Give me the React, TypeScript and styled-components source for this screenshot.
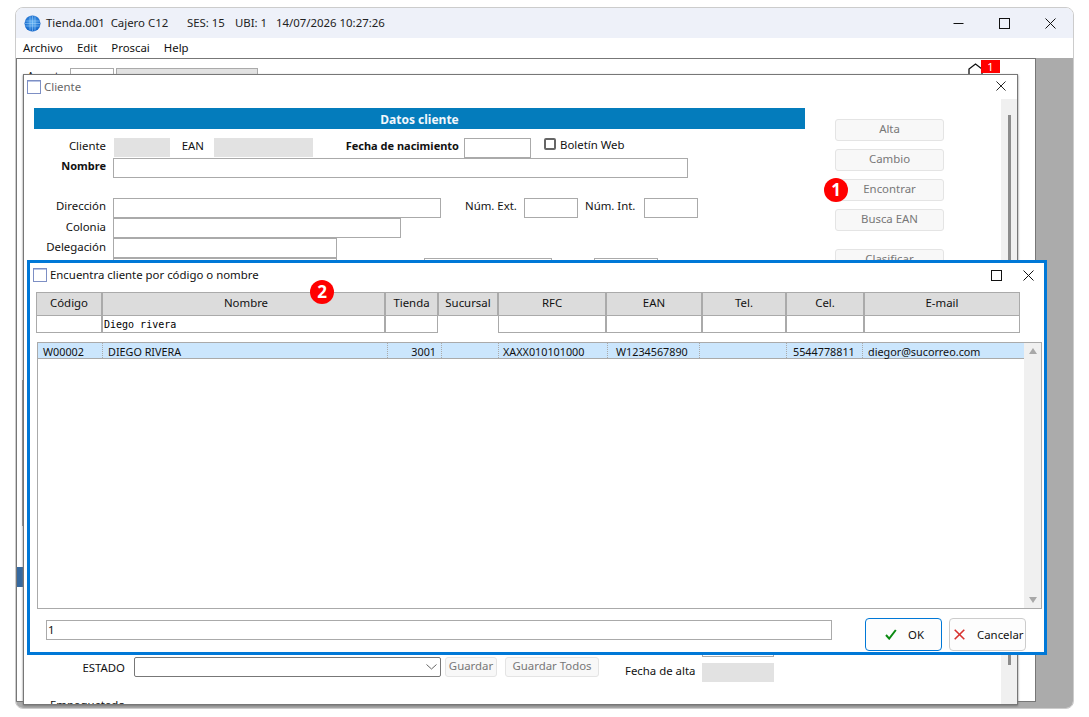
import React from 'react'
import styled, { createGlobalStyle } from 'styled-components'

const GlobalStyle = createGlobalStyle`
  html, body { margin: 0; padding: 0; background: #fff; }
  body { font-family: 'Noto Sans', 'Liberation Sans', sans-serif; font-size: 11.4px; color: #111; }
`

const GlobeIcon = () => (
  <svg width="17" height="17" viewBox="0 0 17 17">
    <defs>
      <radialGradient id="g" cx="50%" cy="45%" r="55%">
        <stop offset="0%" stopColor="#5fb2f5" />
        <stop offset="100%" stopColor="#0f62c8" />
      </radialGradient>
    </defs>
    <circle cx="8.5" cy="8.5" r="8" fill="url(#g)" />
    <path d="M1 6h15M1 8.5h15M1 11h15M6 1v15M8.5 1v15M11 1v15" stroke="#a8d4fa" strokeWidth="0.5" fill="none" />
  </svg>
)

const DocIcon = () => (
  <svg width="14" height="14" viewBox="0 0 14 14">
    <rect x="0.5" y="0.5" width="13" height="13" fill="#fff" stroke="#7d8fc4" />
    <path d="M1 1.5h12" stroke="#b9c5e6" />
  </svg>
)

const CloseIcon = ({ size = 11 }: { size?: number }) => (
  <svg width={size} height={size} viewBox="0 0 11 11">
    <path d="M0.5 0.5l10 10M10.5 0.5l-10 10" stroke="#111" strokeWidth="1" fill="none" />
  </svg>
)

const MaxIcon = () => (
  <svg width="11" height="11" viewBox="0 0 11 11">
    <rect x="0.5" y="0.5" width="10" height="10" fill="none" stroke="#111" />
  </svg>
)

const MinIcon = () => (
  <svg width="11" height="11" viewBox="0 0 11 11">
    <path d="M0.5 5.5h10" stroke="#111" fill="none" />
  </svg>
)

const COLUMNS = [
  { name: 'Código', w: 66 },
  { name: 'Nombre', w: 283, filter: 'Diego rivera', shift: 5 },
  { name: 'Tienda', w: 53 },
  { name: 'Sucursal', w: 60, noFilter: true },
  { name: 'RFC', w: 108 },
  { name: 'EAN', w: 96 },
  { name: 'Tel.', w: 84 },
  { name: 'Cel.', w: 78 },
  { name: 'E-mail', w: 156 },
]

const RESULT = [
  { v: 'W00002', w: 64, pad: 5 },
  { v: 'DIEGO RIVERA', w: 285, pad: 5 },
  { v: '3001', w: 54, pad: 5, right: true },
  { v: '', w: 57, pad: 0 },
  { v: 'XAXX010101000', w: 109, pad: 4 },
  { v: 'W1234567890', w: 92, pad: 8 },
  { v: '', w: 87, pad: 0 },
  { v: '5544778811', w: 76, pad: 6 },
  { v: 'diegor@sucorreo.com', w: 162, pad: 5 },
]

const App = () => {
  return (
    <PAGE>
      <GlobalStyle />
      <SHELL>
        <TITLE_BAR>
          <GlobeIcon />
          <TITLE_TEXT $w={141}>Tienda.001&nbsp; Cajero C12</TITLE_TEXT>
          <TITLE_TEXT $w={48}>SES: 15</TITLE_TEXT>
          <TITLE_TEXT $w={41}>UBI: 1</TITLE_TEXT>
          <TITLE_TEXT>14/07/2026 10:27:26</TITLE_TEXT>
          <WINDOW_CONTROLS>
            <MinIcon />
            <MaxIcon />
            <CloseIcon />
          </WINDOW_CONTROLS>
        </TITLE_BAR>
        <MENU_BAR>
          <span>Archivo</span>
          <span>Edit</span>
          <span>Proscai</span>
          <span>Help</span>
        </MENU_BAR>
        <DESKTOP>
          <PARENT_PANE>
            <PARENT_HEADER>
              <AGENT_LABEL>Agente</AGENT_LABEL>
              <AGENT_INPUT />
              <AGENT_NAME />
              <HOME_ICON>
                <svg width="15" height="14" viewBox="0 0 15 14">
                  <path d="M1 13V6L7.5 1L14 6V13" stroke="#111" strokeWidth="1.3" fill="none" />
                </svg>
                <BADGE>1</BADGE>
              </HOME_ICON>
            </PARENT_HEADER>
            <SIDE_LINE />
            <SIDE_BLOCK />
          </PARENT_PANE>

          <CLIENTE_WINDOW>
            <CHILD_TITLE>
              <DocIcon />
              <CHILD_NAME>Cliente</CHILD_NAME>
              <CHILD_CLOSE>
                <CloseIcon size={10} />
              </CHILD_CLOSE>
            </CHILD_TITLE>
            <CLIENTE_BODY>
              <FORM_COL>
                <SECTION_BAR>Datos cliente</SECTION_BAR>
                <ROW>
                  <LABEL $w={72}>Cliente</LABEL>
                  <READONLY $w={56} $ml={8} />
                  <LABEL $w={23} $ml={11}>EAN</LABEL>
                  <READONLY $w={99} $ml={10} />
                  <LABEL $w={114} $ml={32} $bold>Fecha de nacimiento</LABEL>
                  <FIELD $w={67} $ml={5} />
                  <CHECK_BOX />
                  <CHECK_LABEL>Boletín Web</CHECK_LABEL>
                </ROW>
                <ROW>
                  <LABEL $w={72} $bold>Nombre</LABEL>
                  <FIELD $w={575} $ml={7} />
                </ROW>
                <ROW $mt={20}>
                  <LABEL $w={72}>Dirección</LABEL>
                  <FIELD $w={328} $ml={7} />
                  <LABEL $w={51} $ml={24}>Núm. Ext.</LABEL>
                  <FIELD $w={54} $ml={8} />
                  <LABEL $w={50} $ml={7}>Núm. Int.</LABEL>
                  <FIELD $w={54} $ml={9} />
                </ROW>
                <ROW>
                  <LABEL $w={72} $mt={1}>Colonia</LABEL>
                  <FIELD $w={288} $ml={7} />
                </ROW>
                <ROW>
                  <LABEL $w={72} $mt={1}>Delegación</LABEL>
                  <FIELD $w={224} $ml={7} />
                </ROW>
                <ROW>
                  <FIELD $w={224} $ml={79} />
                  <FIELD $w={128} $ml={87} />
                  <FIELD $w={64} $ml={42} />
                </ROW>
                <ROW $mt={359}>
                  <FIELD $w={72} $ml={668} />
                </ROW>
                <ROW>
                  <LABEL $w={91} $mt={3}>ESTADO</LABEL>
                  <SELECT_BOX>
                    <svg width="11" height="6" viewBox="0 0 11 6">
                      <path d="M0.5 0.5L5.5 5L10.5 0.5" stroke="#666" fill="none" />
                    </svg>
                  </SELECT_BOX>
                  <SMALL_BUTTON $w={52} $ml={4}>Guardar</SMALL_BUTTON>
                  <SMALL_BUTTON $w={94} $ml={8}>Guardar Todos</SMALL_BUTTON>
                  <ALTA_LABEL>Fecha de alta</ALTA_LABEL>
                  <ALTA_VALUE />
                </ROW>
                <PACK_LABEL>Empaquetado</PACK_LABEL>
              </FORM_COL>
              <BUTTON_COL>
                <ACTION_BUTTON>Alta</ACTION_BUTTON>
                <ACTION_BUTTON>Cambio</ACTION_BUTTON>
                <ACTION_BUTTON>Encontrar</ACTION_BUTTON>
                <ACTION_BUTTON>Busca EAN</ACTION_BUTTON>
                <ACTION_BUTTON $mt={10}>Clasificar</ACTION_BUTTON>
              </BUTTON_COL>
              <RAIL>
                <THUMB />
              </RAIL>
            </CLIENTE_BODY>
            <STEP_ONE>1</STEP_ONE>
          </CLIENTE_WINDOW>

          <SEARCH_DIALOG>
            <DIALOG_TITLE>
              <DocIcon />
              <DIALOG_NAME>Encuentra cliente por código o nombre</DIALOG_NAME>
              <DIALOG_CONTROLS>
                <MaxIcon />
                <CloseIcon />
              </DIALOG_CONTROLS>
            </DIALOG_TITLE>
            <TABLE_HEAD>
              {COLUMNS.map((c) => (
                <HEAD_CELL key={c.name} $shift={c.shift}>{c.name}</HEAD_CELL>
              ))}
              {COLUMNS.map((c) => (
                <FILTER_CELL key={c.name} $empty={c.noFilter}>{c.filter}</FILTER_CELL>
              ))}
            </TABLE_HEAD>
            <LIST_BOX>
              <LIST_ROWS>
                <RESULT_ROW>
                  {RESULT.map((r, i) => (
                    <RESULT_CELL key={i} $w={r.w} $pad={r.pad} $right={r.right} $first={i === 0}>{r.v}</RESULT_CELL>
                  ))}
                </RESULT_ROW>
              </LIST_ROWS>
              <LIST_SCROLL>
                <ARROW $up />
                <ARROW />
              </LIST_SCROLL>
            </LIST_BOX>
            <DIALOG_FOOTER>
              <QTY_INPUT>1</QTY_INPUT>
              <FOOT_BUTTON $primary>
                <svg width="12" height="11" viewBox="0 0 12 11">
                  <path d="M1 6l3.2 3.6L10.8 1" stroke="#0b8a12" strokeWidth="2" fill="none" />
                </svg>
                <span>OK</span>
              </FOOT_BUTTON>
              <FOOT_BUTTON>
                <svg width="11" height="11" viewBox="0 0 11 11">
                  <path d="M0.7 0.7l9.6 9.6M10.3 0.7l-9.6 9.6" stroke="#d8322f" strokeWidth="1.6" fill="none" />
                </svg>
                <span>Cancelar</span>
              </FOOT_BUTTON>
            </DIALOG_FOOTER>
            <STEP_TWO>2</STEP_TWO>
          </SEARCH_DIALOG>
        </DESKTOP>
      </SHELL>
    </PAGE>
  )
}

export default App

const PAGE = styled.div`
  width: 1089px;
  height: 717px;
  padding: 7px 15px 8px 15px;
  box-sizing: border-box;
  overflow: hidden;
`

const SHELL = styled.div`
  width: 1059px;
  height: 702px;
  box-sizing: border-box;
  border: 1px solid #ccc;
  border-radius: 8px;
  overflow: hidden;
  display: flex;
  flex-direction: column;
  background: #fff;
`

const TITLE_BAR = styled.div`
  height: 30px;
  flex: none;
  background: #eef1f9;
  display: flex;
  align-items: center;
  padding-left: 8px;
  & > svg {
    margin-right: 5px;
  }
`

const TITLE_TEXT = styled.span<{ $w?: number }>`
  color: #222;
  white-space: nowrap;
  margin-top: -2px;
  width: ${(p) => (p.$w ? `${p.$w}px` : 'auto')};
`

const WINDOW_CONTROLS = styled.div`
  margin-left: auto;
  display: flex;
  gap: 35px;
  padding-right: 17px;
  & > svg {
    margin-right: 0;
  }
`

const MENU_BAR = styled.div`
  height: 20px;
  flex: none;
  display: flex;
  align-items: center;
  gap: 14px;
  padding: 0 0 2px 7px;
  box-sizing: border-box;
  color: #111;
`

const DESKTOP = styled.div`
  flex: 1;
  position: relative;
  background: #ababab;
`

const PARENT_PANE = styled.div`
  width: 1020px;
  height: 644px;
  box-sizing: border-box;
  background: #fff;
  border: 1px solid #777;
  display: flex;
  flex-direction: column;
`

const PARENT_HEADER = styled.div`
  height: 20px;
  padding: 9px 0 0 10px;
  display: flex;
  align-items: flex-start;
  flex: none;
`

const AGENT_LABEL = styled.span`
  width: 43px;
  flex: none;
`

const AGENT_INPUT = styled.div`
  width: 44px;
  height: 20px;
  flex: none;
  box-sizing: border-box;
  border: 1px solid #aaa;
`

const AGENT_NAME = styled.div`
  width: 142px;
  height: 20px;
  margin-left: 2px;
  flex: none;
  box-sizing: border-box;
  background: #e2e2e2;
  border: 1px solid #aaa;
`

const HOME_ICON = styled.div`
  margin-left: 710px;
  margin-top: -5px;
  position: relative;
  display: flex;
`

const BADGE = styled.div`
  position: absolute;
  left: 13px;
  top: -3px;
  width: 19px;
  height: 13px;
  background: #f00;
  color: #fff;
  font-size: 11px;
  line-height: 13px;
  text-align: center;
`

const SIDE_LINE = styled.div`
  width: 1px;
  height: 146px;
  margin: 292px 0 0 5px;
  background: #999;
  flex: none;
`

const SIDE_BLOCK = styled.div`
  width: 6px;
  height: 20px;
  margin-top: 41px;
  background: #36699f;
  flex: none;
`

const CLIENTE_WINDOW = styled.div`
  position: absolute;
  left: 7px;
  top: 16px;
  width: 995px;
  height: 631px;
  box-sizing: border-box;
  background: #fff;
  border: 1px solid #777;
  box-shadow: 0 1px 2px #777;
  display: flex;
  flex-direction: column;
  overflow: hidden;
`

const CHILD_TITLE = styled.div`
  height: 24px;
  flex: none;
  display: flex;
  align-items: center;
  padding-left: 3px;
`

const CHILD_NAME = styled.span`
  margin: -2px 0 0 3px;
  color: #666;
`

const CHILD_CLOSE = styled.div`
  margin: -2px 11px 0 auto;
  display: flex;
`

const CLIENTE_BODY = styled.div`
  flex: 1;
  min-height: 0;
  display: flex;
`

const FORM_COL = styled.div`
  width: 771px;
  flex: none;
  padding: 9px 0 0 10px;
`

const SECTION_BAR = styled.div`
  height: 21px;
  margin-bottom: 9px;
  background: #047cbc;
  color: #f2f7fb;
  font-weight: 700;
  font-size: 12px;
  line-height: 23px;
  text-align: center;
`

const ROW = styled.div<{ $mt?: number }>`
  height: 20px;
  display: flex;
  align-items: flex-start;
  margin-top: ${(p) => p.$mt || 0}px;
`

const LABEL = styled.span<{ $w: number; $ml?: number; $mt?: number; $bold?: boolean }>`
  width: ${(p) => p.$w}px;
  margin-left: ${(p) => p.$ml || 0}px;
  margin-top: ${(p) => p.$mt || 0}px;
  flex: none;
  text-align: right;
  white-space: nowrap;
  line-height: 15px;
  font-size: ${(p) => (p.$bold ? '11px' : 'inherit')};
  font-weight: ${(p) => (p.$bold ? 700 : 400)};
`

const FIELD = styled.div<{ $w: number; $ml?: number }>`
  width: ${(p) => p.$w}px;
  height: 20px;
  margin-left: ${(p) => p.$ml || 0}px;
  flex: none;
  box-sizing: border-box;
  border: 1px solid #aaa;
  background: #fff;
`

const READONLY = styled.div<{ $w: number; $ml?: number }>`
  width: ${(p) => p.$w}px;
  height: 19px;
  margin-left: ${(p) => p.$ml || 0}px;
  flex: none;
  background: #e2e2e2;
`

const CHECK_BOX = styled.div`
  width: 12px;
  height: 12px;
  margin-left: 13px;
  box-sizing: border-box;
  border: 2px solid #666;
  border-radius: 2px;
  flex: none;
`

const CHECK_LABEL = styled.span`
  margin-left: 4px;
  line-height: 14px;
  white-space: nowrap;
`

const SELECT_BOX = styled.div`
  width: 307px;
  height: 20px;
  margin-left: 9px;
  box-sizing: border-box;
  border: 1px solid #777;
  border-radius: 2px;
  flex: none;
  display: flex;
  align-items: center;
  justify-content: flex-end;
  padding-right: 3px;
`

const SMALL_BUTTON = styled.div<{ $w: number; $ml: number }>`
  width: ${(p) => p.$w}px;
  height: 20px;
  margin-left: ${(p) => p.$ml}px;
  flex: none;
  box-sizing: border-box;
  border: 1px solid #e4e4e4;
  border-radius: 3px;
  background: #f8f8f8;
  color: #777;
  text-align: center;
  line-height: 16px;
`

const ALTA_LABEL = styled.span`
  margin: 6px 0 0 26px;
  width: 70px;
  line-height: 15px;
  flex: none;
  white-space: nowrap;
`

const ALTA_VALUE = styled.div`
  width: 72px;
  height: 19px;
  margin: 6px 0 0 7px;
  flex: none;
  background: #e2e2e2;
`

const PACK_LABEL = styled.div`
  margin: 18px 0 0 16px;
  line-height: 20px;
`

const BUTTON_COL = styled.div`
  width: 109px;
  margin-left: 30px;
  padding-top: 20px;
  flex: none;
  display: flex;
  flex-direction: column;
  gap: 8px;
`

const ACTION_BUTTON = styled.div<{ $mt?: number }>`
  height: 22px;
  flex: none;
  margin-top: ${(p) => p.$mt || 0}px;
  box-sizing: border-box;
  border: 1px solid #e4e4e4;
  border-radius: 3px;
  background: #f8f8f8;
  color: #777;
  text-align: center;
  line-height: 18px;
`

const RAIL = styled.div`
  margin-left: auto;
  width: 16px;
  background: #f0f0f0;
  padding-top: 16px;
  box-sizing: border-box;
  display: flex;
  justify-content: center;
`

const THUMB = styled.div`
  width: 3px;
  height: 550px;
  background: #8c8c8c;
`

const STEP_BADGE = styled.div`
  position: absolute;
  width: 24px;
  height: 24px;
  border-radius: 50%;
  background: #f00;
  color: #fff;
  font-weight: 700;
  font-size: 17px;
  line-height: 24px;
  text-align: center;
`

const STEP_ONE = styled(STEP_BADGE)`
  left: 800px;
  top: 103px;
`

const STEP_TWO = styled(STEP_BADGE)`
  left: 280px;
  top: 17px;
`

const SEARCH_DIALOG = styled.div`
  position: absolute;
  left: 11px;
  top: 202px;
  width: 1020px;
  height: 395px;
  box-sizing: border-box;
  background: #fff;
  border: 3px solid #0078d7;
  display: flex;
  flex-direction: column;
`

const DIALOG_TITLE = styled.div`
  height: 24px;
  flex: none;
  display: flex;
  align-items: center;
  padding-left: 3px;
  margin-bottom: 5px;
`

const DIALOG_NAME = styled.span`
  margin: -2px 0 0 3px;
`

const DIALOG_CONTROLS = styled.div`
  margin-left: auto;
  margin-right: 10px;
  display: flex;
  gap: 21px;
`

const TABLE_HEAD = styled.div`
  margin-left: 6px;
  display: grid;
  grid-template-columns: ${COLUMNS.map((c) => `${c.w}px`).join(' ')};
  grid-template-rows: 24px 17px;
  flex: none;
`

const HEAD_CELL = styled.div<{ $shift?: number }>`
  box-sizing: border-box;
  border: 1px solid #aaa;
  background: #dcdcdc;
  color: #111;
  text-align: center;
  line-height: 20px;
  padding-left: ${(p) => p.$shift || 0}px;
`

const FILTER_CELL = styled.div<{ $empty?: boolean }>`
  box-sizing: border-box;
  border: ${(p) => (p.$empty ? 'none' : '1px solid #aaa')};
  border-top: none;
  padding-left: 1px;
  font-family: 'DejaVu Sans Mono', 'Liberation Mono', monospace;
  font-size: 10px;
  line-height: 17px;
  color: #000;
`

const LIST_BOX = styled.div`
  width: 1005px;
  height: 267px;
  margin: 9px 0 0 7px;
  box-sizing: border-box;
  border: 1px solid #aaa;
  display: flex;
  flex: none;
`

const LIST_ROWS = styled.div`
  flex: 1;
  min-width: 0;
`

const RESULT_ROW = styled.div`
  height: 16px;
  box-sizing: border-box;
  background: #cbe6fd;
  border-bottom: 1px solid #aaa;
  display: flex;
`

const RESULT_CELL = styled.div<{ $w: number; $pad: number; $right?: boolean; $first?: boolean }>`
  width: ${(p) => p.$w}px;
  flex: none;
  box-sizing: border-box;
  padding: ${(p) => (p.$right ? `0 ${p.$pad}px 0 0` : `0 0 0 ${p.$pad}px`)};
  border-left: ${(p) => (p.$first ? 'none' : '1px dotted #aaa')};
  text-align: ${(p) => (p.$right ? 'right' : 'left')};
  font-size: 10.8px;
  line-height: 18px;
  white-space: nowrap;
  color: #111;
`

const LIST_SCROLL = styled.div`
  width: 17px;
  flex: none;
  background: #f0f0f0;
  display: flex;
  flex-direction: column;
  justify-content: space-between;
  align-items: center;
  padding: 5px 0;
`

const ARROW = styled.div<{ $up?: boolean }>`
  width: 0;
  height: 0;
  border-left: 4.5px solid transparent;
  border-right: 4.5px solid transparent;
  ${(p) => (p.$up ? 'border-bottom: 6px solid #a8a8a8;' : 'border-top: 6px solid #a8a8a8;')}
`

const DIALOG_FOOTER = styled.div`
  margin: 9px 0 0 16px;
  display: flex;
  align-items: flex-start;
  flex: none;
`

const QTY_INPUT = styled.div`
  width: 786px;
  height: 20px;
  margin: 2px 33px 0 0;
  box-sizing: border-box;
  border: 1px solid #aaa;
  padding-left: 1px;
  line-height: 18px;
`

const FOOT_BUTTON = styled.div<{ $primary?: boolean }>`
  width: 77px;
  height: 33px;
  margin-right: 7px;
  box-sizing: border-box;
  border: 1px solid ${(p) => (p.$primary ? '#0078d7' : '#ccc')};
  border-radius: 4px;
  background: #fdfdfd;
  display: flex;
  align-items: center;
  gap: ${(p) => (p.$primary ? '11px' : '12px')};
  padding-left: ${(p) => (p.$primary ? '19px' : '4px')};
  white-space: nowrap;
`
